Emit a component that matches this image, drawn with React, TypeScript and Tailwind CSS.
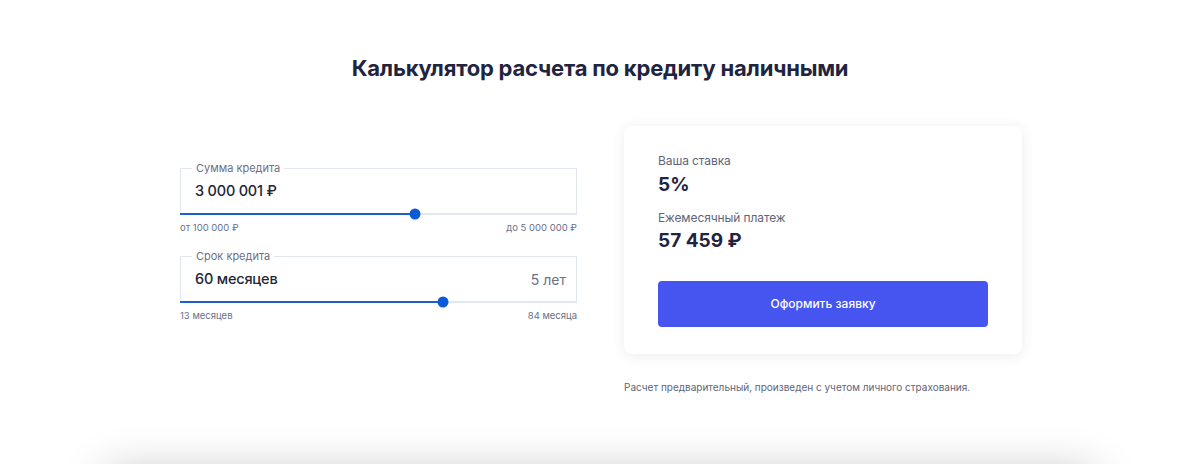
const amount = { value: 3000001, min: 100000, max: 5000000 }
const term = { value: 60, min: 13, max: 84 }

function pct(v: number, min: number, max: number) {
  return ((v - min) / (max - min)) * 100
}

function SliderField({
  label,
  value,
  suffix,
  percent,
  minLabel,
  maxLabel,
}: {
  label: string
  value: string
  suffix?: string
  percent: number
  minLabel: string
  maxLabel: string
}) {
  return (
    <div>
      <div className="relative">
        <span className="absolute -top-[8px] left-[12px] bg-white px-1 text-[11px] leading-[16px] text-[#6b7186]">
          {label}
        </span>
        <div className="flex h-[45px] items-center justify-between border border-b-0 border-[#e2e6ef] pl-[14px] pr-[10px]">
          <span className="text-[14.5px] font-medium tracking-[-0.2px] text-[#222638]">{value}</span>
          {suffix && <span className="text-[14px] text-[#6b7186]">{suffix}</span>}
        </div>
        <div className="relative h-[2px] bg-[#e2e6ef]">
          <div className="h-full bg-[#1a5fd3]" style={{ width: `${percent}%` }} />
          <div
            className="absolute top-1/2 h-[11px] w-[11px] -translate-x-1/2 -translate-y-1/2 rounded-full bg-[#0b5bd6]"
            style={{ left: `${percent}%` }}
          />
        </div>
      </div>
      <div className="mt-[6px] flex justify-between text-[9.5px] leading-[14px] text-[#6b7186]">
        <span>{minLabel}</span>
        <span>{maxLabel}</span>
      </div>
    </div>
  )
}

export default function App() {
  return (
    <div className="min-h-[700px] bg-white font-['Inter',sans-serif] text-[#1f2440]">
      <h1 className="pt-[53px] text-center text-[22px] font-bold leading-[30px] tracking-[-0.2px]">
        Калькулятор расчета по кредиту наличными
      </h1>

      <div className="ml-[180px] mt-[43px] flex w-[842px] items-start justify-between">
        <div className="mt-[42px] flex w-[397px] flex-col gap-[21px]">
          <SliderField
            label="Сумма кредита"
            value="3 000 001 ₽"
            percent={pct(amount.value, amount.min, amount.max)}
            minLabel="от 100 000 ₽"
            maxLabel="до 5 000 000 ₽"
          />
          <SliderField
            label="Срок кредита"
            value="60 месяцев"
            suffix="5 лет"
            percent={pct(term.value, term.min, term.max)}
            minLabel="13 месяцев"
            maxLabel="84 месяца"
          />
        </div>

        <div className="w-[398px] rounded-lg bg-white px-[34px] pb-[27px] pt-[26px] shadow-[0_2px_14px_rgba(40,50,90,0.09)]">
          <div className="text-[12px] leading-[18px] tracking-[-0.1px] text-[#5f6579]">Ваша ставка</div>
          <div className="mt-[2px] text-[19px] font-bold leading-[26px]">5%</div>
          <div className="mt-[11px] text-[12px] leading-[18px] tracking-[-0.1px] text-[#5f6579]">Ежемесячный платеж</div>
          <div className="mt-[1px] text-[19px] font-bold leading-[26px]">57 459 ₽</div>
          <button className="mt-[27px] flex h-[46px] w-full items-center justify-center rounded-[4px] bg-[#4655f0] text-[12px] font-medium text-white">
            Оформить заявку
          </button>
        </div>
      </div>

      <div className="ml-[180px] w-[842px]">
        <p className="ml-[444px] mt-[25px] text-[10px] leading-[16px] text-[#5f6579]">
          Расчет предварительный, произведен с учетом личного страхования.
        </p>
      </div>

      <div className="mx-auto mt-[75px] h-[200px] w-[990px] bg-white shadow-[0_0_40px_rgba(0,0,0,0.22)]" />
    </div>
  )
}
